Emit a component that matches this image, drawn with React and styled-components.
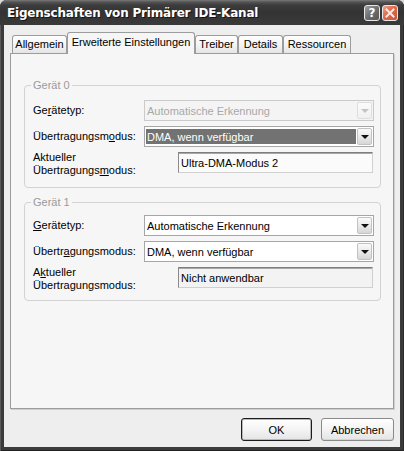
import React from "react";
import styled, { createGlobalStyle } from "styled-components";

const Global = createGlobalStyle`
  html, body { margin: 0; padding: 0; background: #d8d8d8; }
  body { font-family: "Liberation Sans", Arial, sans-serif; font-size: 11px; color: #000; }
  * { box-sizing: border-box; }
`;

const Window = styled.div`
  width: 404px;
  height: 451px;
  display: flex;
  flex-direction: column;
  background: #3b3b3b;
  border-radius: 7px 7px 0 0;
  overflow: hidden;
  box-shadow: inset 1px 0 0 #5a5a5a, inset -1px 0 0 #2a2a2a, inset 0 -1px 0 #222;
`;

const TitleBar = styled.div`
  height: 25px;
  flex: none;
  display: flex;
  align-items: center;
  padding: 0 6px 0 7px;
  background: linear-gradient(to bottom, #7a7a7a 0, #555 2px, #3c3c3c 5px, #333 50%, #3a3a3a 100%);
`;

const Title = styled.div`
  flex: 1;
  color: #fff;
  font-family: "DejaVu Sans", Verdana, sans-serif;
  font-weight: bold;
  font-size: 12px;
  letter-spacing: -0.2px;
  text-shadow: 1px 1px 0 #151515;
  white-space: nowrap;
  padding-top: 1px;
`;

const CapButton = styled.div`
  width: 16px;
  height: 16px;
  margin-left: 2px;
  border: 1px solid #e8e8e8;
  border-radius: 3px;
  display: flex;
  align-items: center;
  justify-content: center;
  color: #fff;
  font-family: "DejaVu Sans", sans-serif;
  font-weight: bold;
  font-size: 12px;
  background: ${(p) =>
    p.$close
      ? "linear-gradient(135deg, #f0a08a 0%, #dc6a4c 45%, #c8553a 100%)"
      : "linear-gradient(135deg, #a0a0a0 0%, #6e6e6e 50%, #555 100%)"};
`;

const Body = styled.div`
  flex: 1;
  margin: 0 4px 4px;
  background: #eeeeee;
  display: flex;
  flex-direction: column;
  padding: 7px 6px 6px;
  min-height: 0;
`;

const TabStrip = styled.div`
  height: 21px;
  flex: none;
  display: flex;
  align-items: flex-end;
  padding-left: 2px;
  position: relative;
  z-index: 1;
`;

const Tab = styled.div`
  width: ${(p) => p.$w}px;
  height: ${(p) => (p.$active ? 22 : 18)}px;
  margin-bottom: ${(p) => (p.$active ? -1 : 0)}px;
  padding-bottom: ${(p) => (p.$active ? 4 : 1)}px;
  display: flex;
  align-items: center;
  justify-content: center;
  border: 1px solid #9c9c9c;
  border-bottom: none;
  border-radius: 3px 3px 0 0;
  background: ${(p) =>
    p.$active ? "#f6f6f6" : "linear-gradient(to bottom, #ffffff 0%, #f2f2f2 60%, #e4e4e4 100%)"};
  white-space: nowrap;
`;

const Panel = styled.div`
  flex: 1;
  min-height: 0;
  background: #f6f6f6;
  border: 1px solid #9c9c9c;
  box-shadow: 1px 1px 0 #cfcfcf;
  padding: 31px 12px 0 13px;
  display: flex;
  flex-direction: column;
`;

const Group = styled.div`
  position: relative;
  border: 1px solid #d2d2d2;
  border-radius: 4px;
  padding: ${(p) => p.$pad}px 6px ${(p) => p.$pad}px 8px;
  margin-bottom: 14px;
  display: flex;
  flex-direction: column;
  gap: 5px;
`;

const Legend = styled.span`
  position: absolute;
  top: -7px;
  left: 6px;
  padding: 0 2px;
  line-height: 13px;
  background: #f6f6f6;
  color: #9a9a9a;
`;

const Row = styled.div`
  display: flex;
  align-items: ${(p) => (p.$top ? "flex-start" : "center")};
  height: 21px;
`;

const Label = styled.div`
  width: ${(p) => p.$w || 111}px;
  flex: none;
  line-height: 13px;
  margin-top: ${(p) => (p.$top ? -1 : 0)}px;
  white-space: nowrap;
`;

const U = styled.span`
  text-decoration: underline;
  text-underline-offset: 1px;
`;

const Combo = styled.div`
  flex: 1;
  height: 21px;
  display: flex;
  padding: 1px;
  gap: 1px;
  border: 1px solid ${(p) => (p.$disabled ? "#cacaca" : "#a6a6a6")};
  background: ${(p) => (p.$disabled ? "#f4f4f4" : "#ffffff")};
  color: ${(p) => (p.$disabled ? "#a8a8a8" : "#000")};
`;

const Field = styled.div`
  flex: 1;
  display: flex;
  align-items: center;
  padding-left: 1px;
  margin: 1px 0;
  background: ${(p) => (p.$selected ? "#727272" : "transparent")};
  color: ${(p) => (p.$selected ? "#fff" : "inherit")};
  white-space: nowrap;
`;

const DropButton = styled.div`
  width: 15px;
  flex: none;
  display: flex;
  align-items: center;
  justify-content: center;
  border: 1px solid ${(p) => (p.$disabled ? "#dedede" : "#c2c2c2")};
  border-radius: 2px;
  background: ${(p) =>
    p.$disabled
      ? "linear-gradient(to bottom, #fbfbfb, #f0f0f0)"
      : "linear-gradient(to bottom, #fafafa 0%, #e6e6e6 60%, #d6d6d6 100%)"};
  &::after {
    content: "";
    display: block;
    width: 0;
    height: 0;
    margin-top: 1px;
    border-left: 4px solid transparent;
    border-right: 4px solid transparent;
    border-top: 4px solid ${(p) => (p.$disabled ? "#c4c4c4" : "#111")};
  }
`;

const TextBox = styled.div`
  flex: 1;
  height: 21px;
  margin-right: 1px;
  display: flex;
  align-items: center;
  padding-left: 2px;
  border: 1px solid;
  border-color: #7e7e7e #d0d0d0 #d0d0d0 #8a8a8a;
  box-shadow: inset 0 1px 0 #a8a8a8;
  background: ${(p) => p.$bg};
  white-space: nowrap;
`;

const ButtonRow = styled.div`
  flex: none;
  display: flex;
  justify-content: flex-end;
  gap: 9px;
  margin-top: 9px;
`;

const Button = styled.div`
  width: ${(p) => p.$w}px;
  height: 23px;
  display: flex;
  align-items: center;
  justify-content: center;
  border: 1px solid ${(p) => (p.$default ? "#1c1c1c" : "#8a8a8a")};
  border-radius: 3px;
  background: linear-gradient(to bottom, #ffffff 0%, #f4f4f4 50%, #e4e4e4 100%);
  box-shadow: ${(p) => (p.$default ? "inset 0 0 0 1px #b8b8b8" : "inset 0 -1px 0 #d4d4d4")};
`;

function DeviceGroup({ title, pad, labels, disabled, selected, current, currentBg }) {
  return (
    <Group $pad={pad}>
      <Legend>{title}</Legend>
      <Row>
        <Label>{labels[0]}</Label>
        <Combo $disabled={disabled}>
          <Field>Automatische Erkennung</Field>
          <DropButton $disabled={disabled} />
        </Combo>
      </Row>
      <Row>
        <Label>{labels[1]}</Label>
        <Combo>
          <Field $selected={selected}>DMA, wenn verfügbar</Field>
          <DropButton />
        </Combo>
      </Row>
      <Row $top>
        <Label $w={145} $top>
          {labels[2]}
        </Label>
        <TextBox $bg={currentBg}>{current}</TextBox>
      </Row>
    </Group>
  );
}

export default function App() {
  return (
    <>
      <Global />
      <Window>
        <TitleBar>
          <Title>Eigenschaften von Primärer IDE-Kanal</Title>
          <CapButton>?</CapButton>
          <CapButton $close>
            <svg width="10" height="10" viewBox="0 0 10 10">
              <path d="M1.5 1.5 L8.5 8.5 M8.5 1.5 L1.5 8.5" stroke="#fbe9e4" strokeWidth="2" strokeLinecap="square" />
            </svg>
          </CapButton>
        </TitleBar>
        <Body>
          <TabStrip>
            <Tab $w={55}>Allgemein</Tab>
            <Tab $w={128} $active>
              Erweiterte Einstellungen
            </Tab>
            <Tab $w={43}>Treiber</Tab>
            <Tab $w={45}>Details</Tab>
            <Tab $w={68}>Ressourcen</Tab>
          </TabStrip>
          <Panel>
            <DeviceGroup
              title="Gerät 0"
              pad={14}
              disabled
              selected
              labels={[
                <>Ge<U>r</U>ätetyp:</>,
                <>Übertragungsm<U>o</U>dus:</>,
                <>Aktueller<br />Übertragungs<U>m</U>odus:</>,
              ]}
              current="Ultra-DMA-Modus 2"
              currentBg="#fbfbfb"
            />
            <DeviceGroup
              title="Gerät 1"
              pad={12}
              labels={[
                <><U>G</U>erätetyp:</>,
                <>Übertr<U>a</U>gungsmodus:</>,
                <>A<U>k</U>tueller<br />Übertragungsmodus:</>,
              ]}
              current="Nicht anwendbar"
              currentBg="#f3f3f3"
            />
          </Panel>
          <ButtonRow>
            <Button $w={71} $default>OK</Button>
            <Button $w={73}>Abbrechen</Button>
          </ButtonRow>
        </Body>
      </Window>
    </>
  );
}
